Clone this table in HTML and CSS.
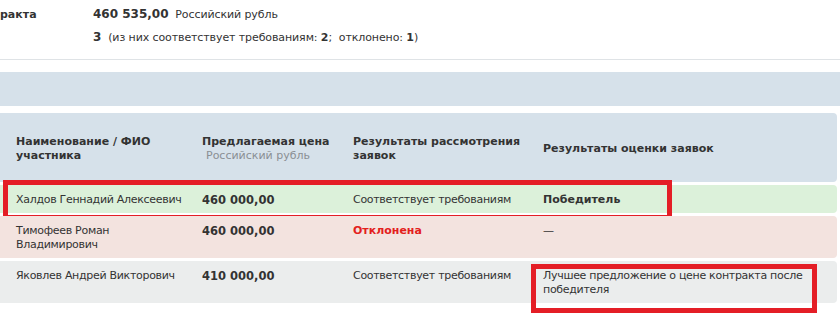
FILE: index.html
```html
<!DOCTYPE html>
<html lang="ru">
<head>
<meta charset="utf-8">
<link rel="stylesheet" href="styles.css">
</head>
<body>
<div class="page">
  <div class="summary">
    <div class="sum-row">
      <div class="sum-label">ракта</div>
      <div class="sum-value"><b class="num">460 535,00</b>&nbsp; Российский рубль</div>
    </div>
    <div class="sum-row">
      <div class="sum-label"></div>
      <div class="sum-value"><b class="num">3</b>&nbsp; (из них соответствует требованиям: <b>2</b>;&nbsp; отклонено: <b>1</b>)</div>
    </div>
  </div>
  <div class="divider"></div>
  <div class="band"></div>
  <div class="table">
    <div class="row head">
      <div class="cell">Наименование / ФИО участника</div>
      <div class="cell">Предлагаемая цена<div class="sub">Российский рубль</div></div>
      <div class="cell">Результаты рассмотрения заявок</div>
      <div class="cell mid">Результаты оценки заявок</div>
    </div>
    <div class="row green">
      <div class="cell">Халдов Геннадий Алексеевич</div>
      <div class="cell price">460 000,00</div>
      <div class="cell">Соответствует требованиям</div>
      <div class="cell strong">Победитель</div>
      <div class="mark mark-row"></div>
    </div>
    <div class="row pink">
      <div class="cell">Тимофеев Роман Владимирович</div>
      <div class="cell price">460 000,00</div>
      <div class="cell rejected">Отклонена</div>
      <div class="cell">—</div>
    </div>
    <div class="row grey">
      <div class="cell">Яковлев Андрей Викторович</div>
      <div class="cell price">410 000,00</div>
      <div class="cell">Соответствует требованиям</div>
      <div class="cell">Лучшее предложение о цене контракта после победителя</div>
      <div class="mark mark-cell"></div>
    </div>
  </div>
</div>
</body>
</html>
```
FILE: styles.css
```css
html, body {
  margin: 0;
  padding: 0;
  background: #fff;
}
body {
  font-family: "DejaVu Sans", Verdana, sans-serif;
  font-size: 11px;
  color: #333;
  overflow: hidden;
}
.page {
  width: 840px;
  height: 318px;
  position: relative;
}
.summary {
  padding-top: 7px;
  display: flex;
  flex-direction: column;
  gap: 8px;
}
.sum-row {
  display: flex;
  line-height: 15px;
}
.sum-label {
  width: 93px;
  font-weight: bold;
}
.sum-value {
  letter-spacing: -0.1px;
}
.sum-value .num {
  font-size: 12px;
  letter-spacing: 0;
}
.divider {
  margin-top: 14px;
  height: 1px;
  background: #dfe3e6;
}
.band {
  margin-top: 12px;
  height: 34px;
  background: #d6e1ea;
}
.table {
  margin-top: 7px;
  margin-left: -6px;
  width: 843px;
  display: flex;
  flex-direction: column;
  gap: 3px;
}
.row {
  position: relative;
  display: grid;
  grid-template-columns: 186px 151px 190px 1fr;
  padding: 8px 0 6px 22px;
  border-radius: 4px;
  line-height: 14px;
  letter-spacing: -0.3px;
}
.cell {
  padding-right: 12px;
}
.head {
  background: #d6e1ea;
  padding-top: 22px;
  padding-bottom: 19px;
  font-weight: bold;
  align-items: start;
  letter-spacing: 0;
}
.head .mid {
  align-self: center;
}
.head .sub {
  font-weight: normal;
  color: #8a8f94;
  padding-left: 4px;
}
.green { background: #dcf1da; }
.pink { background: #f3e3df; }
.grey { background: #ebeded; }
.price {
  font-weight: bold;
  font-size: 11.5px;
  letter-spacing: 0;
}
.strong {
  font-weight: bold;
  letter-spacing: 0;
}
.rejected {
  font-weight: bold;
  color: #e3201c;
  letter-spacing: 0;
}
.mark {
  position: absolute;
  border: 5px solid #e41e26;
  box-sizing: border-box;
}
.mark-row {
  left: 9px;
  top: -5px;
  width: 669px;
  height: 40px;
}
.mark-cell {
  left: 537px;
  top: 3px;
  width: 286px;
  height: 49px;
}
```
